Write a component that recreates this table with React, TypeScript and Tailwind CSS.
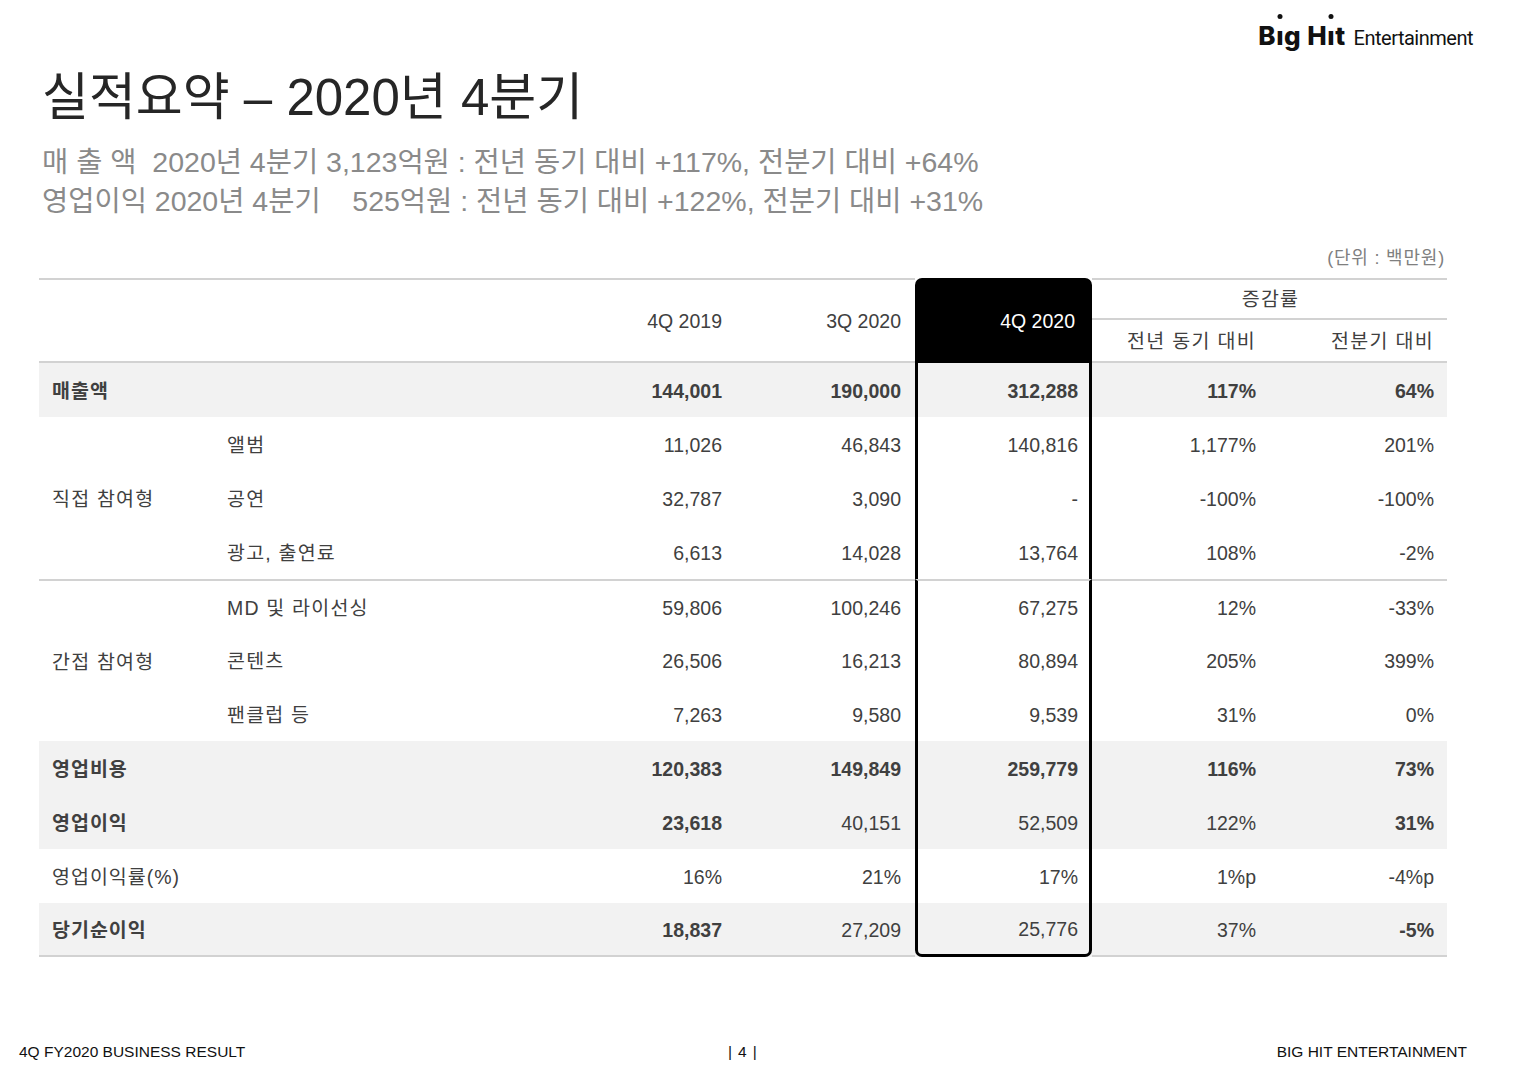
import React from 'react'

type Cell = { v: string; b?: boolean }
type Row = { label: string; cells: Cell[] }

const FONT = { fontFamily: '"Liberation Sans", "Noto Sans CJK KR", sans-serif' }
const COLS = 'grid grid-cols-[176px_344px_178px_178px_177px_178px_177px]'

const c = (v: string, b = false): Cell => ({ v, b })
const allBold = (...vs: string[]) => vs.map((v) => c(v, true))

const direct: Row[] = [
  { label: '앨범', cells: [c('11,026'), c('46,843'), c('140,816'), c('1,177%'), c('201%')] },
  { label: '공연', cells: [c('32,787'), c('3,090'), c('-'), c('-100%'), c('-100%')] },
  { label: '광고, 출연료', cells: [c('6,613'), c('14,028'), c('13,764'), c('108%'), c('-2%')] },
]

const indirect: Row[] = [
  { label: 'MD 및 라이선싱', cells: [c('59,806'), c('100,246'), c('67,275'), c('12%'), c('-33%')] },
  { label: '콘텐츠', cells: [c('26,506'), c('16,213'), c('80,894'), c('205%'), c('399%')] },
  { label: '팬클럽 등', cells: [c('7,263'), c('9,580'), c('9,539'), c('31%'), c('0%')] },
]

// right padding per numeric column (4Q19, 3Q20, 4Q20 box, YoY, QoQ)
const PAD = ['pr-[15px]', 'pr-[14px]', 'pr-[11px]', 'pr-[14px]', 'pr-[13px]']

function Values({ cells, top, last }: { cells: Cell[]; top?: boolean; last?: boolean }) {
  return (
    <>
      {cells.map((cell, i) => {
        const box = i === 2
        return (
          <div
            key={i}
            className={[
              'flex items-center justify-end pt-[3px]',
              PAD[i],
              cell.b ? 'font-bold' : '',
              top ? 'border-t-2 border-t-[#d2d2d2]' : '',
              box ? 'border-x-[3px] border-x-black' : '',
              last && !box ? 'border-b-2 border-b-[#d2d2d2]' : '',
              last && box ? 'border-b-[3px] border-b-black rounded-b-[7px]' : '',
            ].join(' ')}
          >
            {cell.v}
          </div>
        )
      })}
    </>
  )
}

function SimpleRow({ label, cells, gray, last }: Row & { gray?: boolean; last?: boolean }) {
  return (
    <div className={`${COLS} h-[54px] ${gray ? 'bg-[#f2f2f2]' : ''}`}>
      <div className={`col-span-2 flex items-center pl-[13px] pt-[3px] font-bold tracking-[1px] ${last ? 'border-b-2 border-b-[#d2d2d2]' : ''}`}>
        {label}
      </div>
      <Values cells={cells} last={last} />
    </div>
  )
}

function Group({ title, rows, divider }: { title: string; rows: Row[]; divider?: boolean }) {
  return (
    <div className={`${COLS} grid-rows-[54px_54px_54px]`}>
      <div className={`row-span-3 flex items-center pl-[13px] pt-[3px] tracking-[1.2px] ${divider ? 'border-t-2 border-t-[#d2d2d2]' : ''}`}>
        {title}
      </div>
      {rows.map((r, i) => (
        <React.Fragment key={r.label}>
          <div className={`col-start-2 flex items-center pl-[12px] pt-[3px] tracking-[1.2px] ${divider && i === 0 ? 'border-t-2 border-t-[#d2d2d2]' : ''}`}>
            {r.label}
          </div>
          <Values cells={r.cells} top={divider && i === 0} />
        </React.Fragment>
      ))}
    </div>
  )
}

function Dotless() {
  return (
    <span className="relative inline-block">
      ı
      <span className="absolute left-1/2 top-[-9px] h-[5px] w-[5px] -translate-x-1/2 rounded-full bg-[#111]" />
    </span>
  )
}

export default function App() {
  return (
    <div className="relative flex h-[1088px] w-[1532px] flex-col bg-white text-[#404040]" style={FONT}>
      {/* logo */}
      <div className="flex h-[69px] items-start justify-end pr-[59px] pt-[23px]">
        <div className="flex items-baseline text-[#111]">
          <span className="text-[26px] font-extrabold leading-none tracking-[0.5px]" style={{ fontFamily: 'Inter, sans-serif' }}>
            B<Dotless />g H<Dotless />t
          </span>
          <span className="ml-[8px] text-[20px] leading-none tracking-[-0.5px]" style={{ fontFamily: 'Roboto, sans-serif' }}>
            Entertainment
          </span>
        </div>
      </div>

      {/* title */}
      <h1 className="h-[58px] pl-[42px] text-[51px] leading-[58px] text-[#262626]">실적요약 – 2020년 4분기</h1>

      <div className="mt-[16px] whitespace-pre pl-[42px] text-[28.5px] leading-[39px] text-[#8a8a8a]">
        <div>매 출 액  2020년 4분기 3,123억원 : 전년 동기 대비 +117%, 전분기 대비 +64%</div>
        <div>영업이익 2020년 4분기    525억원 : 전년 동기 대비 +122%, 전분기 대비 +31%</div>
      </div>

      {/* table */}
      <div className="ml-[39px] w-[1408px] text-[19.5px]">
        <div className="mt-[25px] h-[24px] pr-[2px] text-right text-[18px] leading-[24px] tracking-[0.8px] text-[#7f7f7f]">(단위 : 백만원)</div>

        <div className={`${COLS} mt-[8px] grid-rows-[42px_43px]`}>
          <div className="col-span-2 row-span-2 border-y-2 border-[#d2d2d2]" />
          <div className="row-span-2 flex items-center justify-end border-y-2 border-[#d2d2d2] pr-[15px] pt-[3px]">4Q 2019</div>
          <div className="row-span-2 flex items-center justify-end border-y-2 border-[#d2d2d2] pr-[14px] pt-[3px]">3Q 2020</div>
          <div className="row-span-2 flex items-center justify-end rounded-t-[7px] bg-black pr-[17px] pt-[3px] text-white">4Q 2020</div>
          <div className="col-span-2 flex items-center justify-center border-y-2 border-[#d2d2d2] pl-[2px] pt-[2px] tracking-[1.2px]">증감률</div>
          <div className="flex items-center justify-end border-b-2 border-[#d2d2d2] pr-[14px] pt-[2px] tracking-[1.3px]">전년 동기 대비</div>
          <div className="flex items-center justify-end border-b-2 border-[#d2d2d2] pr-[13px] pt-[2px] tracking-[1.3px]">전분기 대비</div>
        </div>

        <SimpleRow label="매출액" gray cells={allBold('144,001', '190,000', '312,288', '117%', '64%')} />
        <Group title="직접 참여형" rows={direct} />
        <Group title="간접 참여형" rows={indirect} divider />
        <SimpleRow label="영업비용" gray cells={allBold('120,383', '149,849', '259,779', '116%', '73%')} />
        <SimpleRow label="영업이익" gray cells={[c('23,618', true), c('40,151'), c('52,509'), c('122%'), c('31%', true)]} />
        <div className={`${COLS} h-[54px]`}>
          <div className="col-span-2 flex items-center pl-[13px] pt-[3px] tracking-[1px]">영업이익률(%)</div>
          <Values cells={[c('16%'), c('21%'), c('17%'), c('1%p'), c('-4%p')]} />
        </div>
        <SimpleRow label="당기순이익" gray last cells={[c('18,837', true), c('27,209'), c('25,776'), c('37%'), c('-5%', true)]} />
      </div>

      {/* footer */}
      <div className="mt-auto flex pb-[26px] pl-[19px] pr-[65px] text-[15.5px] leading-[20px] text-[#111]">
        <span className="w-[709px]">4Q FY2020 BUSINESS RESULT</span>
        <span className="flex gap-[6px]">
          <span>|</span>
          <span>4</span>
          <span>|</span>
        </span>
        <span className="ml-auto">BIG HIT ENTERTAINMENT</span>
      </div>
    </div>
  )
}
